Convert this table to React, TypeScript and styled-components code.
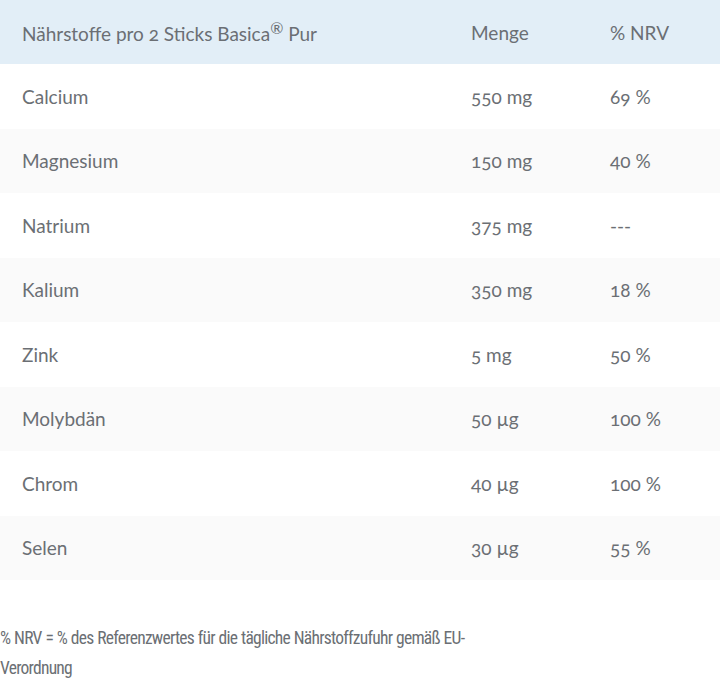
import styled, { createGlobalStyle } from 'styled-components';

interface Nutrient {
  name: string;
  amount: string;
  nrv: string;
}

const nutrients: Nutrient[] = [
  { name: 'Calcium', amount: '550 mg', nrv: '69 %' },
  { name: 'Magnesium', amount: '150 mg', nrv: '40 %' },
  { name: 'Natrium', amount: '375 mg', nrv: '---' },
  { name: 'Kalium', amount: '350 mg', nrv: '18 %' },
  { name: 'Zink', amount: '5 mg', nrv: '50 %' },
  { name: 'Molybdän', amount: '50 µg', nrv: '100 %' },
  { name: 'Chrom', amount: '40 µg', nrv: '100 %' },
  { name: 'Selen', amount: '30 µg', nrv: '55 %' },
];

const GlobalStyle = createGlobalStyle`
  body {
    margin: 0;
    background: #fff;
    font-family: Lato, 'Open Sans', sans-serif;
    color: #6b6f74;
  }
`;

const Table = styled.table`
  width: 720px;
  border-collapse: collapse;
  table-layout: fixed;
  font-size: 19px;
  font-feature-settings: 'onum' 1;
  font-variant-numeric: oldstyle-nums;
`;

const HeadRow = styled.tr`
  background: #e2eef7;
  height: 64px;
`;

const Row = styled.tr<{ $shaded: boolean }>`
  background: ${(p) => (p.$shaded ? '#fafafa' : '#fff')};
  height: 64.5px;
`;

// widths are the full column widths; padding is part of them
const Cell = styled.td<{ $width: number }>`
  box-sizing: border-box;
  width: ${(p) => p.$width}px;
  padding: 0 0 0 22px;
  text-align: left;
  font-weight: 400;
  vertical-align: middle;
  white-space: nowrap;
`;

const HeadCell = styled(Cell).attrs({ as: 'th' })``;

const Note = styled.p`
  margin: 43px 0 0;
  max-width: 500px;
  font-family: Roboto, Lato, sans-serif;
  font-stretch: 75%;
  font-size: 17.5px;
  letter-spacing: -0.75px;
  word-spacing: 0.5px;
  line-height: 30px;
`;

const App = () => (
  <>
    <GlobalStyle />
    <Table>
      <thead>
        <HeadRow>
          <HeadCell $width={449}>
            Nährstoffe pro 2 Sticks Basica<sup>®</sup> Pur
          </HeadCell>
          <HeadCell $width={139}>Menge</HeadCell>
          <HeadCell $width={132}>% NRV</HeadCell>
        </HeadRow>
      </thead>
      <tbody>
        {nutrients.map((n, i) => (
          <Row key={n.name} $shaded={i % 2 === 1}>
            <Cell $width={449}>{n.name}</Cell>
            <Cell $width={139}>{n.amount}</Cell>
            <Cell $width={132}>{n.nrv}</Cell>
          </Row>
        ))}
      </tbody>
    </Table>
    <Note>% NRV = % des Referenzwertes für die tägliche Nährstoffzufuhr gemäß EU-Verordnung</Note>
  </>
);

export default App;
